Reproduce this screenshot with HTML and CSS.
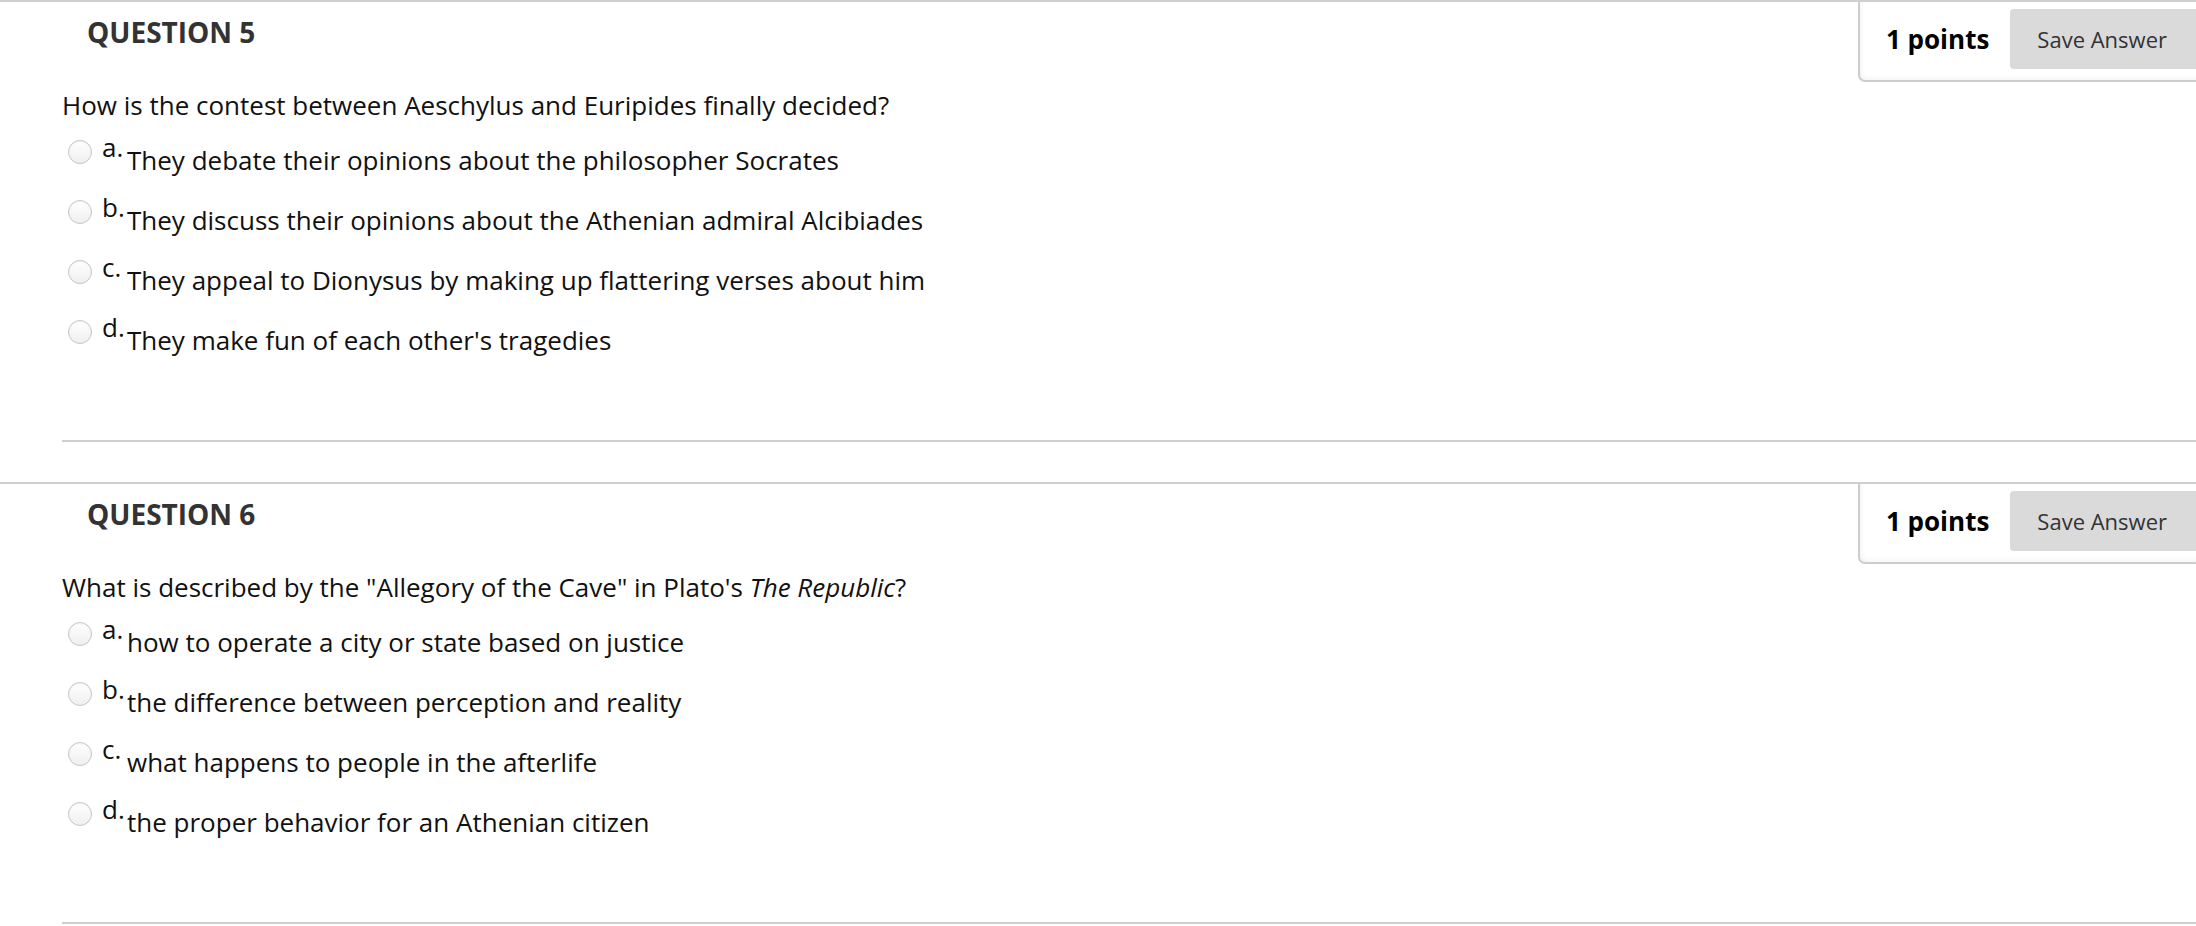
FILE: index.html
```html
<!DOCTYPE html>
<html lang="en">
<head>
<meta charset="utf-8">
<title>Questions</title>
<link rel="stylesheet" href="styles.css">
</head>
<body>
  <div class="question">
    <div class="q-head">
      <h3 class="q-title">QUESTION 5</h3>
      <div class="points-box">
        <span class="points">1 points</span>
        <button class="save-btn" type="button">Save Answer</button>
      </div>
    </div>
    <div class="q-body">
      <p class="q-text">How is the contest between Aeschylus and Euripides finally decided?</p>
      <div class="options">
        <div class="opt"><span class="radio"></span><span class="letter">a.</span><span class="opt-text">They debate their opinions about the philosopher Socrates</span></div>
        <div class="opt"><span class="radio"></span><span class="letter">b.</span><span class="opt-text">They discuss their opinions about the Athenian admiral Alcibiades</span></div>
        <div class="opt"><span class="radio"></span><span class="letter">c.</span><span class="opt-text">They appeal to Dionysus by making up flattering verses about him</span></div>
        <div class="opt"><span class="radio"></span><span class="letter">d.</span><span class="opt-text">They make fun of each other's tragedies</span></div>
      </div>
      <div class="separator"></div>
    </div>
  </div>

  <div class="question">
    <div class="q-head">
      <h3 class="q-title">QUESTION 6</h3>
      <div class="points-box">
        <span class="points">1 points</span>
        <button class="save-btn" type="button">Save Answer</button>
      </div>
    </div>
    <div class="q-body">
      <p class="q-text">What is described by the "Allegory of the Cave" in Plato's <em>The Republic</em>?</p>
      <div class="options">
        <div class="opt"><span class="radio"></span><span class="letter">a.</span><span class="opt-text">how to operate a city or state based on justice</span></div>
        <div class="opt"><span class="radio"></span><span class="letter">b.</span><span class="opt-text">the difference between perception and reality</span></div>
        <div class="opt"><span class="radio"></span><span class="letter">c.</span><span class="opt-text">what happens to people in the afterlife</span></div>
        <div class="opt"><span class="radio"></span><span class="letter">d.</span><span class="opt-text">the proper behavior for an Athenian citizen</span></div>
      </div>
      <div class="separator"></div>
    </div>
  </div>
</body>
</html>
```

FILE: styles.css
```css
html, body {
  margin: 0;
  padding: 0;
  background: #fff;
}

body {
  font-family: "Open Sans", "Liberation Sans", sans-serif;
  color: #111;
  overflow: hidden;
}

.question {
  border-top: 2px solid #cfcfcf;
}

.q-head {
  display: flex;
  justify-content: space-between;
  align-items: flex-start;
}

.q-title {
  margin: 0;
  padding: 11px 0 0 87px;
  font-size: 28px;
  line-height: 38px;
  font-weight: 700;
  color: #333;
}

.points-box {
  display: flex;
  align-items: center;
  gap: 21px;
  padding: 7px 0 11px 26px;
  border-left: 2px solid #cdcdcd;
  border-bottom: 2px solid #cdcdcd;
  border-bottom-left-radius: 7px;
  box-shadow: inset 3px -3px 6px -3px rgba(0, 0, 0, 0.07);
}

.points {
  font-size: 26px;
  font-weight: 700;
  color: #000;
  line-height: 36px;
}

.save-btn {
  height: 60px;
  padding: 0 29px 0 27px;
  border: 0;
  border-radius: 4px 0 0 4px;
  background: #dadada;
  font-family: "Open Sans", "Liberation Sans", sans-serif;
  font-size: 22px;
  color: #333;
}

.q-body {
  padding-left: 62px;
}

.q-text {
  margin: 5px 0 0;
  font-size: 26px;
  line-height: 36px;
  color: #111;
}

.q-text em {
  font-style: italic;
}

.options {
  display: flex;
  flex-direction: column;
  gap: 10px;
  margin-top: 5px;
}

.opt {
  display: flex;
  align-items: flex-start;
  font-size: 26px;
  line-height: 36px;
}

.radio {
  flex: none;
  width: 24px;
  height: 24px;
  box-sizing: border-box;
  margin: 12px 10px 0 6px;
  border: 1px solid #c6c6c6;
  border-radius: 50%;
  background: linear-gradient(#ffffff, #efefef);
  box-shadow: inset 0 1px 2px rgba(0, 0, 0, 0.05);
}

.letter {
  flex: none;
  width: 25px;
  padding-top: 1px;
  color: #111;
}

.opt-text {
  padding-top: 14px;
  color: #111;
}

.separator {
  margin-top: 82px;
  margin-bottom: 40px;
  height: 2px;
  background: #cfcfcf;
}
```
